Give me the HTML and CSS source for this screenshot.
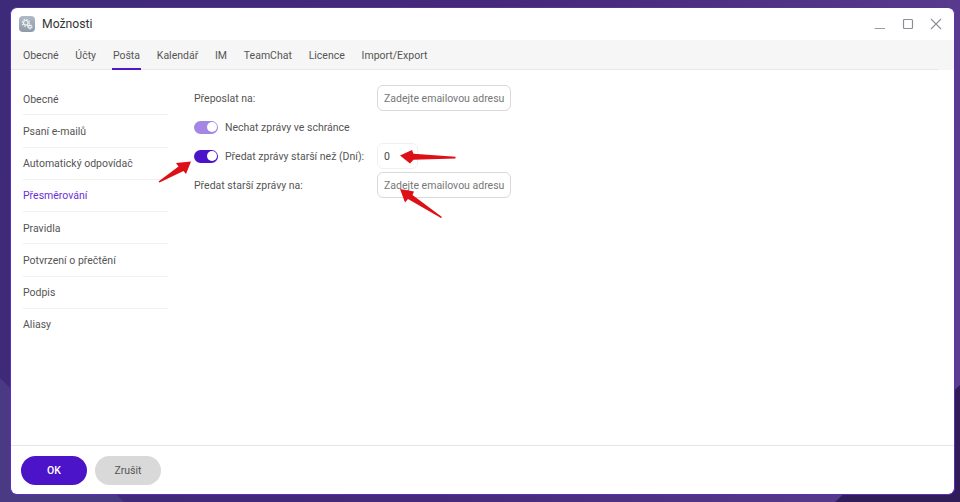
FILE: index.html
```html
<!DOCTYPE html>
<html lang="cs">
<head>
    <meta charset="UTF-8">
    <title>Možnosti</title>
    <link rel="stylesheet" href="styles.css">
</head>
<body>
    <div class="bg-shape bg-shape-left"></div>
    <div class="bg-shape bg-shape-right"></div>
    <div class="window">
        <div class="titlebar">
            <div class="app-icon">
                <svg width="16" height="16" viewBox="0 0 16 16">
                    <circle cx="6.800" cy="6.800" r="2.300" fill="none" stroke="#eef1f4" stroke-width="1.200"/>
                    <circle cx="6.800" cy="6.800" r="3.500" fill="none" stroke="#eef1f4" stroke-width="1.300" stroke-dasharray="1.400 1.350"/>
                    <circle cx="11" cy="10.800" r="1.400" fill="none" stroke="#fff" stroke-width="1"/>
                    <circle cx="11" cy="10.800" r="2.200" fill="none" stroke="#fff" stroke-width=".9" stroke-dasharray="1 .75"/>
                </svg>
            </div>
            <div class="title">Možnosti</div>
            <div class="win-controls">
                <svg width="12" height="12" viewBox="0 0 12 12"><path d="M0.500 10.500H11" stroke="#9a9ea4" stroke-width="1.200"/></svg>
                <svg width="12" height="12" viewBox="0 0 12 12"><rect x="1.500" y="1.500" width="9" height="9" rx="1" fill="none" stroke="#8a8f96" stroke-width="1.200"/></svg>
                <svg width="12" height="12" viewBox="0 0 12 12"><path d="M1 1L11 11M11 1L1 11" stroke="#8a8f96" stroke-width="1.100"/></svg>
            </div>
        </div>
        <div class="tabs">
            <a class="tab">Obecné</a>
            <a class="tab">Účty</a>
            <a class="tab active">Pošta</a>
            <a class="tab">Kalendář</a>
            <a class="tab">IM</a>
            <a class="tab">TeamChat</a>
            <a class="tab">Licence</a>
            <a class="tab">Import/Export</a>
        </div>
        <div class="main">
            <div class="sidebar">
                <a class="side-item">Obecné</a>
                <a class="side-item">Psaní e-mailů</a>
                <a class="side-item">Automatický odpovídač</a>
                <a class="side-item active">Přesměrování</a>
                <a class="side-item">Pravidla</a>
                <a class="side-item">Potvrzení o přečtění</a>
                <a class="side-item">Podpis</a>
                <a class="side-item last">Aliasy</a>
            </div>
            <div class="form">
                <div class="row">
                    <label class="label">Přeposlat na:</label>
                    <div class="input">Zadejte emailovou adresu</div>
                </div>
                <div class="row row-toggle">
                    <span class="toggle faded"><span class="knob"></span></span>
                    <span>Nechat zprávy ve schránce</span>
                </div>
                <div class="row row-days">
                    <label class="label label-toggle">
                        <span class="toggle"><span class="knob"></span></span>
                        <span>Předat zprávy starší než (Dní):</span>
                    </label>
                    <div class="input input-num">0</div>
                </div>
                <div class="row row-last">
                    <label class="label">Předat starší zprávy na:</label>
                    <div class="input">Zadejte emailovou adresu</div>
                </div>
            </div>
        </div>
        <div class="footer">
            <button class="btn btn-primary">OK</button>
            <button class="btn btn-cancel">Zrušit</button>
        </div>
    </div>
    <svg class="arrows" width="960" height="502" viewBox="0 0 960 502">
        <path d="M158.500 181.500L178.500 166.500L176 163L191 161.500L186 174L183.500 171L159.500 182.500Z" fill="#dc1016"/>
        <path d="M455.500 156.800L413.500 153.800L412 150L400 155.500L410 163.500L413.500 159.800L455.500 158.500Z" fill="#dc1016"/>
        <path d="M442 217L412.500 195L414 191.500L400 189L405 202.500L408 199L441 218Z" fill="#dc1016"/>
    </svg>
</body>
</html>
```

FILE: styles.css
```css
html, body {
    margin: 0;
    padding: 0;
    height: 100%;
    overflow: hidden;
}
body {
    position: relative;
    box-sizing: border-box;
    padding: 7px 5px 7px 10px;
    background: linear-gradient(100deg, #3d2a78 0%, #46297a 50%, #5c3d90 100%);
    font-family: Roboto, sans-serif;
    font-size: 10.5px;
    color: #555;
}
.bg-shape {
    position: absolute;
    bottom: 0;
}
.bg-shape-left {
    left: 0;
    width: 124px;
    height: 124px;
    background: #4a3a84;
    clip-path: polygon(0 0, 100% 100%, 0 100%);
}
.bg-shape-right {
    right: 0;
    width: 125px;
    height: 117px;
    background: #301c58;
    clip-path: polygon(100% 0, 100% 100%, 0 100%);
}
.window {
    position: relative;
    display: flex;
    flex-direction: column;
    height: 100%;
    box-sizing: border-box;
    background: #fff;
    border: 1px solid #5a30b8;
    border-top-color: #55388c;
    border-radius: 7px;
    overflow: hidden;
}
.titlebar {
    display: flex;
    align-items: center;
    height: 32px;
    padding: 0 12px 0 8px;
    flex-shrink: 0;
}
.app-icon {
    display: flex;
    align-items: center;
    justify-content: center;
    width: 16px;
    height: 16px;
    border-radius: 4px;
    background: linear-gradient(#b0bac6, #8f9aa8);
}
.title {
    margin-left: 7px;
    font-size: 12.2px;
    color: #333;
}
.win-controls {
    display: flex;
    gap: 16px;
    margin-left: auto;
}
.tabs {
    display: flex;
    gap: 14.800px;
    height: 30px;
    padding: 0 11px;
    background: linear-gradient(#e8e8e8, #e8e8e8) left bottom / calc(100% - 16px) 1px no-repeat, #f6f6f6;
    flex-shrink: 0;
}
.tab {
    display: flex;
    align-items: center;
    box-sizing: border-box;
    padding: 3px 1px 0;
    border-bottom: 2px solid transparent;
    color: #555;
}
.tab.active {
    border-bottom-color: #5018c8;
}
.main {
    display: flex;
    flex: 1;
    min-height: 0;
}
.sidebar {
    width: 145px;
    margin-left: 12px;
    padding-top: 13px;
    flex-shrink: 0;
}
.side-item {
    display: flex;
    align-items: center;
    height: 30.250px;
    border-bottom: 1px solid #f0f0f0;
    padding-top: 1px;
    color: #555;
}
.side-item.active {
    color: #6a2fd8;
}
.side-item.last {
    border-bottom: 0;
}
.form {
    margin-left: 26px;
    padding-top: 15px;
}
.row {
    display: flex;
    align-items: center;
    height: 26px;
}
.label {
    display: flex;
    align-items: center;
    width: 183px;
}
.label-toggle, .row-toggle {
    gap: 7px;
}
.row-toggle {
    height: 18px;
    margin-top: 7px;
}
.row-days {
    margin-top: 7px;
}
.row-last {
    margin-top: 3px;
}
.toggle {
    display: flex;
    justify-content: flex-end;
    align-items: center;
    width: 24px;
    height: 13px;
    padding: 0 1px;
    box-sizing: border-box;
    border-radius: 7px;
    background: #4c14c8;
}
.toggle.faded {
    background: #a487e2;
}
.knob {
    width: 10px;
    height: 10px;
    border-radius: 50%;
    background: #fff;
}
.input {
    display: flex;
    align-items: center;
    width: 134px;
    height: 26px;
    box-sizing: border-box;
    padding: 0 6px;
    border: 1px solid #d9d9d9;
    border-radius: 6px;
    color: #777;
    white-space: nowrap;
}
.input-num {
    width: 41px;
    border-color: #f0f0f0;
    color: #444;
}
.footer {
    display: flex;
    align-items: center;
    gap: 8px;
    height: 49px;
    padding: 0 10px;
    box-sizing: border-box;
    border-top: 1px solid #e6e6e6;
    flex-shrink: 0;
}
.btn {
    width: 66px;
    height: 29px;
    border: 0;
    border-radius: 15px;
    font-family: Roboto, sans-serif;
    font-size: 10.5px;
}
.btn-primary {
    background: #4c14c8;
    color: #fff;
    font-weight: 500;
}
.btn-cancel {
    background: #d9d9d9;
    color: #555;
}
.arrows {
    position: absolute;
    left: 0;
    top: 0;
    pointer-events: none;
}
```
